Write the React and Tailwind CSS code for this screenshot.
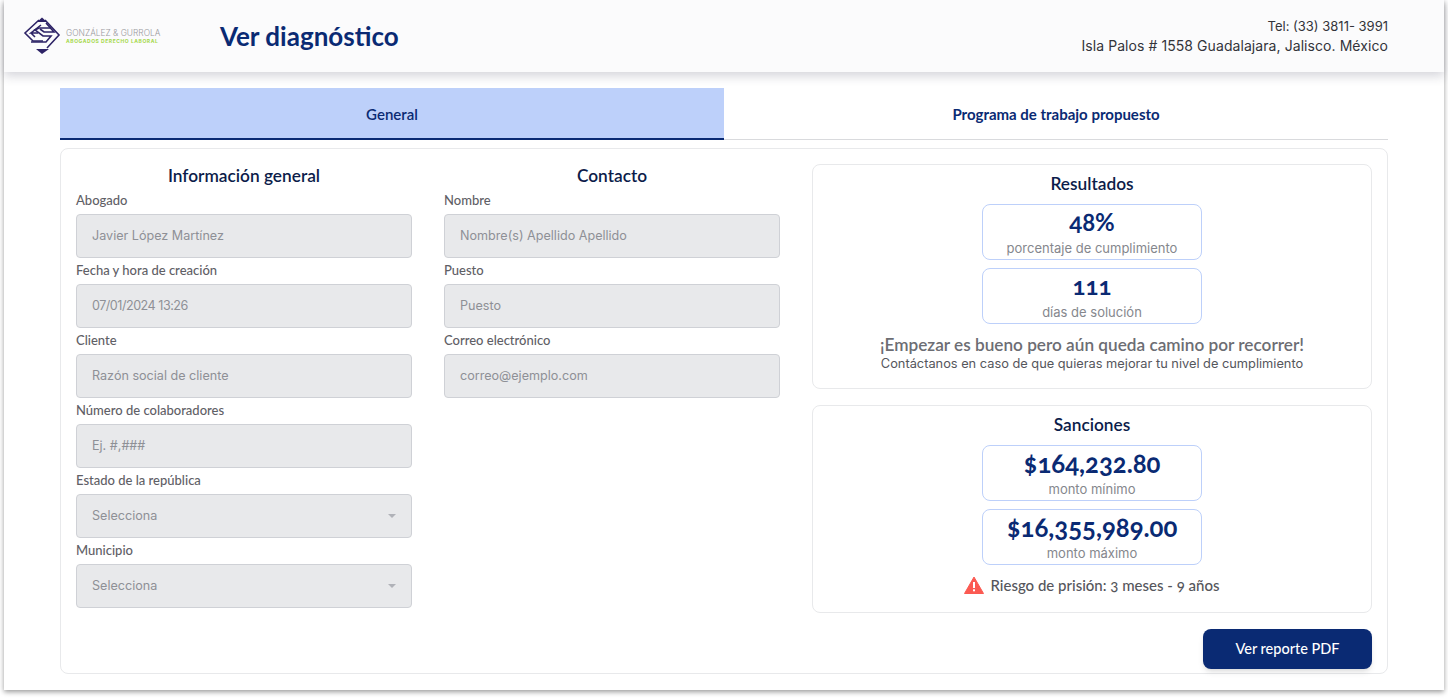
const raleway = "font-['Lato','Open_Sans',sans-serif]";
const mont = "font-['Inter','Open_Sans',sans-serif]";

function Logo() {
  return (
    <div className="flex items-center gap-[5px]">
      <svg width="38" height="38" viewBox="0 0 38 38" fill="none" stroke="#2d2366" strokeWidth="1.6">
        <path d="M22 3 L36 18 L24 31" />
        <path d="M16 3 L2 16 L10 24 H20" />
        <path d="M18 8 L8 16 H15 M8 16 L12 20" />
        <path d="M28 11 H16 L12 13 L20 19 H28 L23 25 H8" />
        <path d="M23 6 L31 15 H21 L17 12" />
        <path d="M13 32 H26 L19 37 Z" fill="#2d2366" stroke="none" />
        <path d="M14 5 H24 L19 0.5 Z" fill="#2d2366" stroke="none" />
      </svg>
      <div className={`flex flex-col ${mont} w-[95px]`}>
        <span className="text-[8.4px] leading-[9px] font-light text-[#9a9a9e] whitespace-nowrap">GONZÁLEZ &amp; GURROLA</span>
        <span className="text-[5px] leading-[6px] font-bold text-[#a4d84a] whitespace-nowrap tracking-[0.55px]">ABOGADOS DERECHO LABORAL</span>
      </div>
    </div>
  );
}

function Field({ label, value, select, valueClass = "" }) {
  return (
    <div className="flex flex-col">
      <label className={`h-[26px] flex items-center text-[13px] font-medium text-[#5f6066] ${raleway}`}>{label}</label>
      <div className="h-[44px] px-[15px] flex items-center justify-between bg-[#e8e9eb] border border-[#cfd1d6] rounded-[4px]">
        <span className={`text-[12.6px] text-[#8e9096] ${mont} ${valueClass}`}>{value}</span>
        {select && <span className="w-0 h-0 border-x-[4px] border-x-transparent border-t-[4px] border-t-[#b0b2b8]" />}
      </div>
    </div>
  );
}

function Stat({ value, label, size = "text-[24px]" }) {
  return (
    <div className="w-[220px] h-[56px] border border-[#bdd0fa] rounded-lg flex flex-col items-center">
      <span className={`${size} leading-[34px] h-[34px] font-bold text-[#0a2a73] ${raleway} [font-variant-numeric:oldstyle-nums]`}>{value}</span>
      <span className={`text-[13px] leading-[18px] text-[#85878d] ${mont}`}>{label}</span>
    </div>
  );
}

function Title({ children }) {
  return <h2 className={`h-6 flex items-center justify-center text-[17.3px] font-semibold text-[#0c1c4a] ${raleway}`}>{children}</h2>;
}

export default function App() {
  return (
    <div className="w-[1448px] h-[698px] bg-white overflow-hidden">
      <div className="ml-1 w-[1440px] h-[690px] bg-white shadow-[0_2px_5px_rgba(0,0,0,0.4)]">
        <header className="h-[72px] pl-[19px] pr-14 flex items-center bg-[#fbfbfc] shadow-[0_4px_10px_rgba(40,40,70,0.2)]">
          <Logo />
          <h1 className={`ml-[59px] text-[26px] font-bold text-[#0a2a73] ${raleway}`}>Ver diagnóstico</h1>
          <div className={`ml-auto text-right leading-[20px] text-[#33343a] ${mont}`}>
            <div className="text-[13px]">Tel: (33) 3811- 3991</div>
            <div className="text-[14px] tracking-[0.07px]">Isla Palos # 1558 Guadalajara, Jalisco. México</div>
          </div>
        </header>

        <div className="mx-14 pt-4">
          <div className={`flex h-[52px] text-[15px] ${raleway}`}>
            <div className="w-1/2 pt-[2px] flex items-center justify-center bg-[#bdd0fa] border-b-2 border-[#0a2a73] font-semibold text-[#0a2a73]">General</div>
            <div className="w-1/2 pt-px flex items-center justify-center border-b border-[#d9dadd] font-bold text-[#0a2a73]">Programa de trabajo propuesto</div>
          </div>

          <div className="mt-2 h-[526px] border border-[#e8e9eb] rounded-lg px-[15px] pt-[15px] flex gap-8">
            <div className="w-[336px]">
              <Title>Información general</Title>
              <Field label="Abogado" value="Javier López Martínez" />
              <Field label="Fecha y hora de creación" value="07/01/2024 13:26" valueClass="tracking-[-0.5px]" />
              <Field label="Cliente" value="Razón social de cliente" />
              <Field label="Número de colaboradores" value="Ej. #,###" />
              <Field label="Estado de la república" value="Selecciona" select />
              <Field label="Municipio" value="Selecciona" select />
            </div>
            <div className="w-[336px]">
              <Title>Contacto</Title>
              <Field label="Nombre" value="Nombre(s) Apellido Apellido" />
              <Field label="Puesto" value="Puesto" />
              <Field label="Correo electrónico" value="correo@ejemplo.com" />
            </div>
            <div className="w-[560px] flex flex-col">
              <section className="h-[225px] border border-[#e8e9eb] rounded-lg pt-[7px] flex flex-col items-center">
                <Title>Resultados</Title>
                <div className="mt-2 flex flex-col gap-2">
                  <Stat value="48%" label="porcentaje de cumplimiento" />
                  <Stat value="111" label="días de solución" />
                </div>
                <p className={`mt-[11px] h-[20px] text-[17.2px] leading-[20px] font-semibold text-[#6c6d73] ${raleway}`}>¡Empezar es bueno pero aún queda camino por recorrer!</p>
                <p className={`text-[12.8px] leading-[18px] text-[#55565c] ${mont}`}>Contáctanos en caso de que quieras mejorar tu nivel de cumplimiento</p>
              </section>
              <section className="mt-4 h-[208px] border border-[#e8e9eb] rounded-lg pt-[7px] flex flex-col items-center">
                <Title>Sanciones</Title>
                <div className="mt-2 flex flex-col gap-2">
                  <Stat value="$164,232.80" label="monto mínimo" size="text-[25.7px]" />
                  <Stat value="$16,355,989.00" label="monto máximo" size="text-[25.7px]" />
                </div>
                <div className="mt-[9px] flex items-center gap-[6px]">
                  <svg width="20" height="18" viewBox="0 0 20 18">
                    <path d="M10 1 L19.5 17.5 H0.5 Z" fill="#fb5a52" stroke="#fb5a52" strokeLinejoin="round" />
                    <rect x="9" y="6" width="2" height="6" fill="#fff" />
                    <rect x="9" y="13.3" width="2" height="2" fill="#fff" />
                  </svg>
                  <span className={`text-[15px] font-medium text-[#55565c] ${raleway} [font-variant-numeric:oldstyle-nums]`}>Riesgo de prisión: 3 meses - 9 años</span>
                </div>
              </section>
              <div className="mt-4 flex justify-end">
                <button className={`w-[169px] h-10 rounded-lg bg-[#0a2a73] text-white text-[14.5px] font-medium shadow-md ${raleway}`}>Ver reporte PDF</button>
              </div>
            </div>
          </div>
        </div>
      </div>
    </div>
  );
}
